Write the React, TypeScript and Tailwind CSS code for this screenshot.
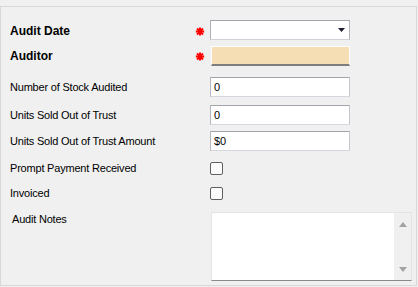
import React from "react";

const font = { fontFamily: '"Liberation Sans", Arial, sans-serif' };

function Star() {
  return (
    <svg width="10" height="9" viewBox="0 0 10 9" className="block">
      <g stroke="#ff0000" strokeWidth="2" strokeLinecap="butt">
        <line x1="5" y1="0.5" x2="5" y2="8.5" />
        <line x1="0.8" y1="4.5" x2="9.2" y2="4.5" />
        <line x1="2" y1="1.5" x2="8" y2="7.5" />
        <line x1="8" y1="1.5" x2="2" y2="7.5" />
      </g>
    </svg>
  );
}

function TextBox({ value }: { value: string }) {
  return (
    <div className="w-[140px] h-[20px] bg-white border border-t-[#a3a3ab] border-l-[#b6b6be] border-r-[#c6c6ce] border-b-[#d6d6de] flex items-center pl-[3px] text-[11px] text-black">
      {value}
    </div>
  );
}

function Label({ children }: { children: React.ReactNode }) {
  return (
    <div className="w-[186px] text-[11px] text-black tracking-[-0.2px] leading-[13px]">
      {children}
    </div>
  );
}

function CheckBox() {
  return <div className="w-[13px] h-[13px] rounded-[2px] border border-[#5f5f5f] bg-[#fbfbfb]" />;
}

export default function App() {
  return (
    <div className="w-[418px] h-[287px] bg-[#f0f0f0] pt-[6px] overflow-hidden" style={font}>
      <div className="w-[417px] h-[280px] border border-[#d8d8d8] pl-[9px] pt-[13px] flex flex-col">
        {/* Audit Date */}
        <div className="flex items-center h-[20px]">
          <div className="w-[185px] text-[12px] font-bold text-black leading-[14px] pt-[2px]">Audit Date</div>
          <div className="w-[15px] flex items-center pt-[3px]">
            <Star />
          </div>
          <div className="w-[140px] h-[20px] bg-white border border-t-[#a3a3ab] border-l-[#b0b0b8] border-r-[#b6b6be] border-b-[#d0d0d8] relative">
            <svg width="7" height="4" viewBox="0 0 7 4" className="absolute left-[127px] top-[7px]">
              <polygon points="0,0 7,0 3.5,4" fill="#1e1e32" />
            </svg>
          </div>
        </div>
        {/* Auditor */}
        <div className="flex items-center h-[20px] mt-[6px]">
          <div className="w-[185px] text-[12px] font-bold text-black leading-[14px]">Auditor</div>
          <div className="w-[15px] flex items-center pt-[1px]">
            <Star />
          </div>
          <div className="ml-[1px] w-[139px] h-[20px] bg-[#f5deb3] border border-t-white border-l-white border-r-white border-b-[#7e7e7e] border-b-[2px]" />
        </div>
        {/* Number of Stock Audited */}
        <div className="flex items-center h-[20px] mt-[11px]">
          <Label>Number of Stock Audited</Label>
          <div className="w-[14px]" />
          <TextBox value="0" />
        </div>
        <div className="flex items-center h-[20px] mt-[8px]">
          <Label>Units Sold Out of Trust</Label>
          <div className="w-[14px]" />
          <TextBox value="0" />
        </div>
        <div className="flex items-center h-[20px] mt-[6px]">
          <Label>Units Sold Out of Trust Amount</Label>
          <div className="w-[14px]" />
          <TextBox value="$0" />
        </div>
        <div className="flex items-center h-[20px] mt-[7px]">
          <Label>Prompt Payment Received</Label>
          <div className="w-[14px]" />
          <CheckBox />
        </div>
        <div className="flex items-center h-[20px] mt-[5px]">
          <Label>Invoiced</Label>
          <div className="w-[14px]" />
          <CheckBox />
        </div>
        <div className="flex items-start mt-[9px]">
          <div className="w-[186px] pl-[2px] pt-[1px] text-[11px] text-black tracking-[-0.2px] leading-[13px]">
            Audit Notes
          </div>
          <div className="w-[14px]" />
          <div className="ml-[1px] w-[201px] h-[69px] bg-white border border-t-[#e4e4e4] border-l-[#e4e4e4] border-r-[#e4e4e4] border-b-[#8a8a8a] flex justify-end">
            <div className="w-[17px] h-full bg-[#f0f0f0] flex flex-col items-center justify-between pt-[9px] pb-[8px]">
              <svg width="8" height="5" viewBox="0 0 8 5">
                <polygon points="0,5 8,5 4,0" fill="#a3a3a3" />
              </svg>
              <svg width="8" height="5" viewBox="0 0 8 5">
                <polygon points="0,0 8,0 4,5" fill="#a3a3a3" />
              </svg>
            </div>
          </div>
        </div>
      </div>
    </div>
  );
}
